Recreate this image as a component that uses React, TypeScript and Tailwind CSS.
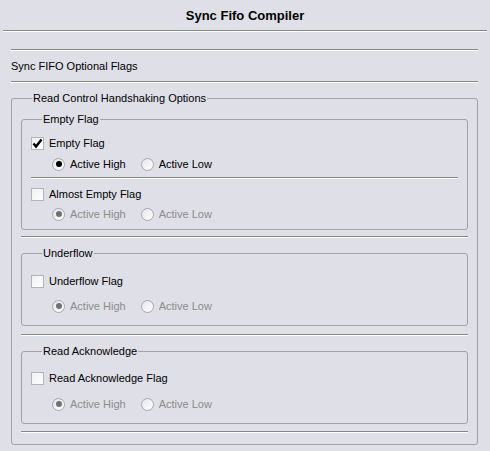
const font = { fontFamily: '"Liberation Sans", Arial, sans-serif' }

function Etched({ className = '' }: { className?: string }) {
  return <div className={`h-[2px] border-t border-t-[#868686] border-b border-b-white ${className}`} />
}

function Check({ checked, label }: { checked?: boolean; label: string }) {
  return (
    <div className="flex items-center h-[15px] gap-[5px]">
      <div className="w-[13px] h-[13px] border border-[#b4b4b8] bg-gradient-to-br from-[#f0f0f3] to-white flex items-center justify-center">
        {checked && (
          <svg width="11" height="11" viewBox="0 0 11 11">
            <path d="M1.5 5.5 L4 8.5 L9.5 1.5" fill="none" stroke="#000" strokeWidth="2.4" strokeLinejoin="miter" />
          </svg>
        )}
      </div>
      <span className="text-[11px] text-black leading-none">{label}</span>
    </div>
  )
}

function Radio({ on, disabled, label }: { on?: boolean; disabled?: boolean; label: string }) {
  return (
    <div className="flex items-center gap-[5px]">
      <div className="w-[13px] h-[13px] rounded-full border border-[#a8a8ac] bg-gradient-to-br from-[#e6e6ea] to-white flex items-center justify-center">
        {on && <div className={`w-[6px] h-[6px] rounded-full ${disabled ? 'bg-[#707070]' : 'bg-black'}`} />}
      </div>
      <span className={`text-[11px] leading-none ${disabled ? 'text-[#8c8c8c]' : 'text-black'}`}>{label}</span>
    </div>
  )
}

function RadioRow({ disabled, className = '' }: { disabled?: boolean; className?: string }) {
  return (
    <div className={`flex items-center h-[16px] pl-[21px] gap-[15px] ${className}`}>
      <Radio on disabled={disabled} label="Active High" />
      <Radio disabled={disabled} label="Active Low" />
    </div>
  )
}

function Group({ title, children, className = '' }: { title: string; children: React.ReactNode; className?: string }) {
  return (
    <fieldset className={`border border-[#a2a2a6] rounded-[3px] px-[9px] ${className}`}>
      <legend className="ml-[11px] px-[1px] text-[11px] leading-[13px] text-black">{title}</legend>
      {children}
    </fieldset>
  )
}

export default function App() {
  return (
    <div className="w-[490px] h-[451px] bg-[#dfdfe7] overflow-hidden" style={font}>
      <div className="h-[30px] flex items-center justify-center text-[13px] font-bold text-black pt-[1px]">
        Sync Fifo Compiler
      </div>
      <Etched className="ml-[3px] mr-[3px]" />

      <div className="pl-[11px] pr-[12px]">
        <Etched className="mt-[17px]" />
        <div className="h-[30px] flex items-center text-[11px] text-black">Sync FIFO Optional Flags</div>
        <Etched />

        <fieldset className="mt-[9px] border border-[#a2a2a6] rounded-[3px] px-[9px] pb-[11px]">
          <legend className="ml-[11px] px-[1px] text-[11px] leading-[13px] text-black">
            Read Control Handshaking Options
          </legend>

          <Group title="Empty Flag" className="mt-[8px] pb-[7px]">
            <div className="mt-[10px]">
              <Check checked label="Empty Flag" />
            </div>
            <RadioRow className="mt-[5px]" />
            <Etched className="mt-[5px]" />
            <div className="mt-[8px]">
              <Check label="Almost Empty Flag" />
            </div>
            <RadioRow disabled className="mt-[4px]" />
          </Group>

          <Etched className="mt-[6px]" />

          <Group title="Underflow" className="mt-[9px] pb-[11px]">
            <div className="mt-[14px]">
              <Check label="Underflow Flag" />
            </div>
            <RadioRow disabled className="mt-[9px]" />
          </Group>

          <Etched className="mt-[8px]" />

          <Group title="Read Acknowledge" className="mt-[9px] pb-[11px]">
            <div className="mt-[13px]">
              <Check label="Read Acknowledge Flag" />
            </div>
            <RadioRow disabled className="mt-[10px]" />
          </Group>

          <Etched className="mt-[7px]" />
        </fieldset>
      </div>
    </div>
  )
}
